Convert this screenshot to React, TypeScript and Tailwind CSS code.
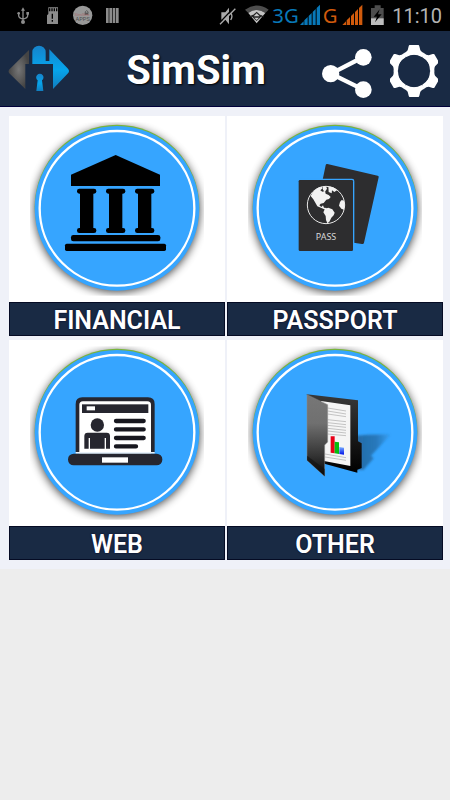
import type { ReactNode } from "react";

function Badge({ id, children }: { id: string; children: ReactNode }) {
  return (
    <svg className="h-[186px] w-[180px]" viewBox="0 0 540 558" aria-hidden="true">
      <defs>
        <filter id={`${id}-blur`} x="-20%" y="-20%" width="140%" height="140%">
          <feGaussianBlur stdDeviation="15" />
        </filter>
        <clipPath id={`${id}-clip`}>
          <rect x="9" y="19" width="522" height="520" />
        </clipPath>
      </defs>
      <g clipPath={`url(#${id}-clip)`}>
        <circle cx="270" cy="281" r="247" fill="#000" opacity="0.75" filter={`url(#${id}-blur)`} />
      </g>
      <circle cx="270" cy="273" r="247" fill="#78b43c" />
      <circle cx="270" cy="277" r="247" fill="#36a5ff" />
      <circle cx="270" cy="277" r="232" fill="none" stroke="#fff" strokeWidth="7" />
      {children}
    </svg>
  );
}

function BankArt() {
  return (
    <g transform="translate(-81 -24)" fill="#000">
      <path d="M347 141 480 200V234H213V200Z" />
      {[260, 347, 434].map((x) => (
        <g key={x}>
          <rect x={x - 29} y="242" width="58" height="15" rx="7" />
          <rect x={x - 20} y="250" width="40" height="116" />
          <rect x={x - 29} y="360" width="58" height="15" rx="7" />
        </g>
      ))}
      <rect x="213" y="381" width="268" height="19" rx="7" />
      <rect x="195" y="407" width="303" height="22" rx="5" />
    </g>
  );
}

function PassportArt() {
  return (
    <g transform="translate(-72 -24)">
      <path
        d="M319 168 470 203Q474 204 473 208L429 404Q428 409 423 408L398 404 304 220 314 172Q315 167 319 168Z"
        fill="#2d2d2f"
      />
      <rect x="230" y="212" width="170" height="220" rx="7" fill="#36a5ff" />
      <rect x="233" y="216" width="163" height="213" rx="4" fill="#2d2d2f" />
      <circle cx="315" cy="291" r="56" fill="none" stroke="#e8e8e8" strokeWidth="3" />
      <g fill="#f2f2f2">
        <path d="M269 264Q280 240 302 236L305 241 298 247 304 251 312 249 314 257 323 261 329 267 324 273 316 275 308 285 299 287 295 292 301 297 306 292 309 299 318 300 313 305 303 301 289 295 283 284 277 274Z" />
        <path d="M312 302 322 299 334 304 341 314 338 322 331 329 325 341 319 346 315 336 314 324 307 313Z" />
        <path d="M305 236 315 235 318 242 312 251 306 246ZM322 235Q339 237 349 246L340 252 333 247 332 256 323 252Z" />
        <path d="M357 282 362 276 369 278Q373 292 369 305L361 302 354 293Z" />
      </g>
      <text x="315" y="396" textAnchor="middle" fill="#d7d7d7" fontSize="27" fontFamily='"Noto Sans", sans-serif'>
        PASS
      </text>
    </g>
  );
}

function LaptopArt() {
  return (
    <g transform="translate(-81 -13)" fill="#26262f">
      <path d="M227 350V205Q227 185 247 185H444Q464 185 464 205V350Z" />
      <path d="M238 354V208Q238 197 249 197H442Q453 197 453 208V354Z" fill="#fff" />
      <rect x="227" y="349" width="237" height="5" fill="#e8f1fa" />
      <rect x="246" y="206" width="199" height="26" />
      <rect x="260" y="212" width="25" height="12" fill="#fff" />
      <circle cx="292" cy="268" r="20" />
      <path d="M253 339V301Q253 291 263 291H320Q330 291 330 301V339H318V307H314V339H270V307H266V339Z" />
      <g stroke="#17171f" strokeWidth="13" strokeLinecap="round">
        <path d="M348 256H431M348 281H431M348 307H431M348 332H408" />
      </g>
      <rect x="204" y="354" width="283" height="35" rx="17" />
      <rect x="306" y="365" width="78" height="16" fill="#fff" />
    </g>
  );
}

function FolderArt() {
  return (
    <g transform="translate(-72 -13)">
      <defs>
        <linearGradient id="folder-front" x1="0" y1="0" x2="0" y2="1">
          <stop offset="0" stopColor="#777" />
          <stop offset="0.35" stopColor="#707070" />
          <stop offset="0.75" stopColor="#333" />
          <stop offset="1" stopColor="#050505" />
        </linearGradient>
        <linearGradient id="folder-back" x1="0" y1="0" x2="0" y2="1">
          <stop offset="0" stopColor="#383838" />
          <stop offset="0.5" stopColor="#1c1c1c" />
          <stop offset="1" stopColor="#000" />
        </linearGradient>
        <linearGradient id="folder-shadow" x1="0" y1="0" x2="1" y2="0">
          <stop offset="0" stopColor="#1f5c8f" stopOpacity="0.8" />
          <stop offset="0.6" stopColor="#1f5c8f" stopOpacity="0.6" />
          <stop offset="1" stopColor="#1f5c8f" stopOpacity="0.05" />
        </linearGradient>
        <linearGradient id="bar-blue" x1="0" y1="0" x2="0" y2="1">
          <stop offset="0" stopColor="#7ab0ff" />
          <stop offset="1" stopColor="#0010e8" />
        </linearGradient>
        <filter id="shadow-soft">
          <feGaussianBlur stdDeviation="3" />
        </filter>
      </defs>
      <path d="M405 300 440 297 510 296 450 360 458 368 428 402H400Z" fill="url(#folder-shadow)" filter="url(#shadow-soft)" />
      <path d="M257 176 411 194V317L422 323V397L409 402V411L310 384Z" fill="url(#folder-back)" />
      <path d="M300 196 388 209V391L309 376V320Z" fill="#f5f5f5" />
      <g stroke="#a9a9a9" strokeWidth="2">
        <path d="M320 217 375 226M320 226 375 235M320 235 375 243M320 252 375 258M320 261 375 267M320 269 375 275M320 278 375 284M320 286 375 292M320 295 375 300M312 355 375 366M312 364 375 374" />
      </g>
      <path d="M329 302H341V353L329 351Z" fill="#e80018" />
      <path d="M341 318 354 320V355L341 353Z" fill="#06bd10" />
      <path d="M355 334 369 336V357L355 355Z" fill="url(#bar-blue)" />
      <path d="M258 177 320 207V319L311 328V422L258 374Z" fill="url(#folder-front)" stroke="#8a8a8a" strokeWidth="1.5" />
      <path d="M258 374 311 422V400L258 360Z" fill="#111" opacity="0.6" />
    </g>
  );
}

const categories = [
  { id: "financial", label: "FINANCIAL", art: <BankArt /> },
  { id: "passport", label: "PASSPORT", art: <PassportArt /> },
  { id: "web", label: "WEB", art: <LaptopArt /> },
  { id: "other", label: "OTHER", art: <FolderArt /> },
];

function NotificationIcons() {
  return (
    <svg className="h-[31px] w-[130px]" viewBox="0 0 390 93" aria-hidden="true">
      <g fill="none" stroke="#8c8c8c" strokeWidth="4">
        <path d="M69 28V66M56 40V47Q56 54 69 57Q83 54 83 47V40" />
      </g>
      <g fill="#8c8c8c">
        <path d="M69 22 75 32H63Z" />
        <circle cx="69" cy="66" r="6" />
        <circle cx="56" cy="40" r="4" />
        <rect x="79" y="36" width="8" height="8" />
        <path d="M145 22H174V72H141V46L145 42Z" />
        <circle cx="248" cy="46" r="29" fill="#989898" />
        <path d="M318 24H326V69H318ZM328 24H336V69H328ZM338 24H346V69H338ZM348 24H356V69H348Z" />
      </g>
      <path d="M149 25V34M156 25V34M163 25V34M170 25V34M157 41V56M157 60V65" stroke="#000" strokeWidth="4" />
      <path d="M256 39V35Q260 29 264 35V39" fill="none" stroke="#444" strokeWidth="2" />
      <rect x="254" y="38" width="11" height="7" fill="#555" />
      <text x="246" y="48" textAnchor="middle" fontSize="13" fill="#a66a6c" fontFamily="Roboto, sans-serif">SimSim</text>
      <text x="248" y="62" textAnchor="middle" fontSize="17" fill="#4c4c4c" fontFamily="Roboto, sans-serif">APPS</text>
    </svg>
  );
}

function SystemIcons() {
  return (
    <svg className="h-[31px] w-[170px]" viewBox="645 0 510 93" role="img" aria-label="Muted, Wi-Fi, 3G and G signal, battery charging">
      <path d="M667 37H679L690 23V73L679 59H667Z" fill="#aaa" />
      <path d="M661 69 706 22" stroke="#000" strokeWidth="4" />
      <path d="M663 73 709 26M696 40Q702 49 695 60" stroke="#aaa" strokeWidth="4" fill="none" />
      <path d="M738 29Q773 4 809 29L799 39Q773 21 748 39Z" fill="#4d4d4d" />
      <path d="M748 39Q773 21 799 39L773 70Z" fill="#c4c4c4" />
      <path d="M773 35 788 49 773 63 758 49Z" fill="#222" />
      <path d="M773 40 782 49H764ZM766 53H780L773 60Z" fill="#ccc" />
      <path d="M752 51 762 46M784 46 794 51" stroke="#222" strokeWidth="4" />
      <text x="820" y="68" fontSize="61" fill="#0878b8" fontFamily='"Noto Sans", sans-serif'>3G</text>
      <path d="M903 75 914 64V75ZM916 75V61L926 51V75ZM929 75V48L938 39V75ZM941 75V36L950 27V75ZM953 75V24L963 14V75Z" fill="#0878b8" />
      <text x="971" y="68" fontSize="61" fill="#d05a0c" fontFamily='"Noto Sans", sans-serif'>G</text>
      <path d="M1030 75 1041 64V75ZM1043 75V61L1053 51V75ZM1056 75V48L1065 39V75ZM1068 75V36L1077 27V75ZM1080 75V24L1090 14V75Z" fill="#d05a0c" />
      <path d="M1127 16H1145V24H1154V75H1116V24H1127Z" fill="#4d4d4d" />
      <path d="M1116 55H1154V75H1116Z" fill="#bdbdbd" />
      <path d="M1142 28 1124 50H1134L1128 67 1148 43H1137Z" fill="#000" />
    </svg>
  );
}

function LogoArt() {
  return (
    <svg className="h-[48px] w-[62px] shrink-0" viewBox="26 132 186 144" role="img" aria-label="SimSim logo">
      <defs>
        <radialGradient id="logo-grey">
          <stop offset="0" stopColor="#777" />
          <stop offset="1" stopColor="#444" />
        </radialGradient>
        <linearGradient id="logo-blue" x1="0" y1="0" x2="0" y2="1">
          <stop offset="0" stopColor="#1683cb" />
          <stop offset="0.55" stopColor="#06a5ec" />
          <stop offset="1" stopColor="#117dbe" />
        </linearGradient>
      </defs>
      <path d="M89 147V189H78V264L29 216Q26 211 29 206Z" fill="url(#logo-grey)" />
      <path d="M99 189V153A20 19 0 0 1 139 153V180H150V145L206 203Q212 210 206 217L161 264V189Z" fill="url(#logo-blue)" />
      <path d="M115 238A11 11 0 1 1 128 238L132 270H111Z" fill="url(#logo-blue)" />
    </svg>
  );
}

function ShareArt() {
  return (
    <svg className="h-[54px] w-[50px]" viewBox="291 132 150 162" aria-hidden="true">
      <path d="M415 171 318 221 415 269" fill="none" stroke="#fff" strokeWidth="13" />
      <g fill="#fff">
        <circle cx="317" cy="221" r="26" />
        <circle cx="415" cy="172" r="25" />
        <circle cx="415" cy="269" r="25" />
      </g>
    </svg>
  );
}

function GearArt() {
  return (
    <svg className="h-[54px] w-[48px]" viewBox="494 132 144 162" aria-hidden="true">
      <circle cx="566" cy="213" r="54" fill="none" stroke="#fff" strokeWidth="9" />
      {["rotate(0 566 213)", "rotate(60 566 213)", "rotate(120 566 213)", "rotate(180 566 213)", "rotate(240 566 213)", "rotate(300 566 213)"].map((turn) => (
        <path
          key={turn}
          transform={turn}
          d="M553 135H579Q581 135 582 139L585 151Q589 157 597 160L589 171Q566 157 543 171L535 160Q543 157 547 151L550 139Q551 135 553 135Z"
          fill="#fff"
        />
      ))}
    </svg>
  );
}

export default function App() {
  return (
    <div className="min-h-screen bg-[#ededed] font-[Roboto,sans-serif]">
      <div className="flex h-[31px] items-center justify-between bg-black pr-2">
        <NotificationIcons />
        <div className="flex items-center gap-2">
          <SystemIcons />
          <time className="pt-0.5 text-[20px] leading-[31px] text-[#b4b4b4]">11:10</time>
        </div>
      </div>
      <header className="flex h-[76px] items-center border-b border-[#00003a] bg-[#192a44] pr-3 pl-2">
        <LogoArt />
        <h1 className="flex-1 pt-1 text-center text-[40px] leading-[72px] font-bold text-white [text-shadow:1px_1px_2px_#000]">
          SimSim
        </h1>
        <div className="flex items-center gap-[18px] pt-1">
          <button type="button" aria-label="Share">
            <ShareArt />
          </button>
          <button type="button" aria-label="Settings">
            <GearArt />
          </button>
        </div>
      </header>
      <main className="grid grid-cols-2 gap-x-[2px] gap-y-1 bg-[#eff1f8] py-[9px] pr-[7px] pl-[9px]">
        {categories.map(({ id, label, art }) => (
          <button key={id} type="button" className="flex flex-col items-stretch bg-white">
            <span className="flex justify-center">
              <Badge id={id}>{art}</Badge>
            </span>
            <span className="h-[34px] border border-[#050b24] bg-[#192a44] text-center text-[25px] leading-[36px] font-semibold text-white [text-shadow:0_0_2px_#000020]">
              {label}
            </span>
          </button>
        ))}
      </main>
    </div>
  );
}
